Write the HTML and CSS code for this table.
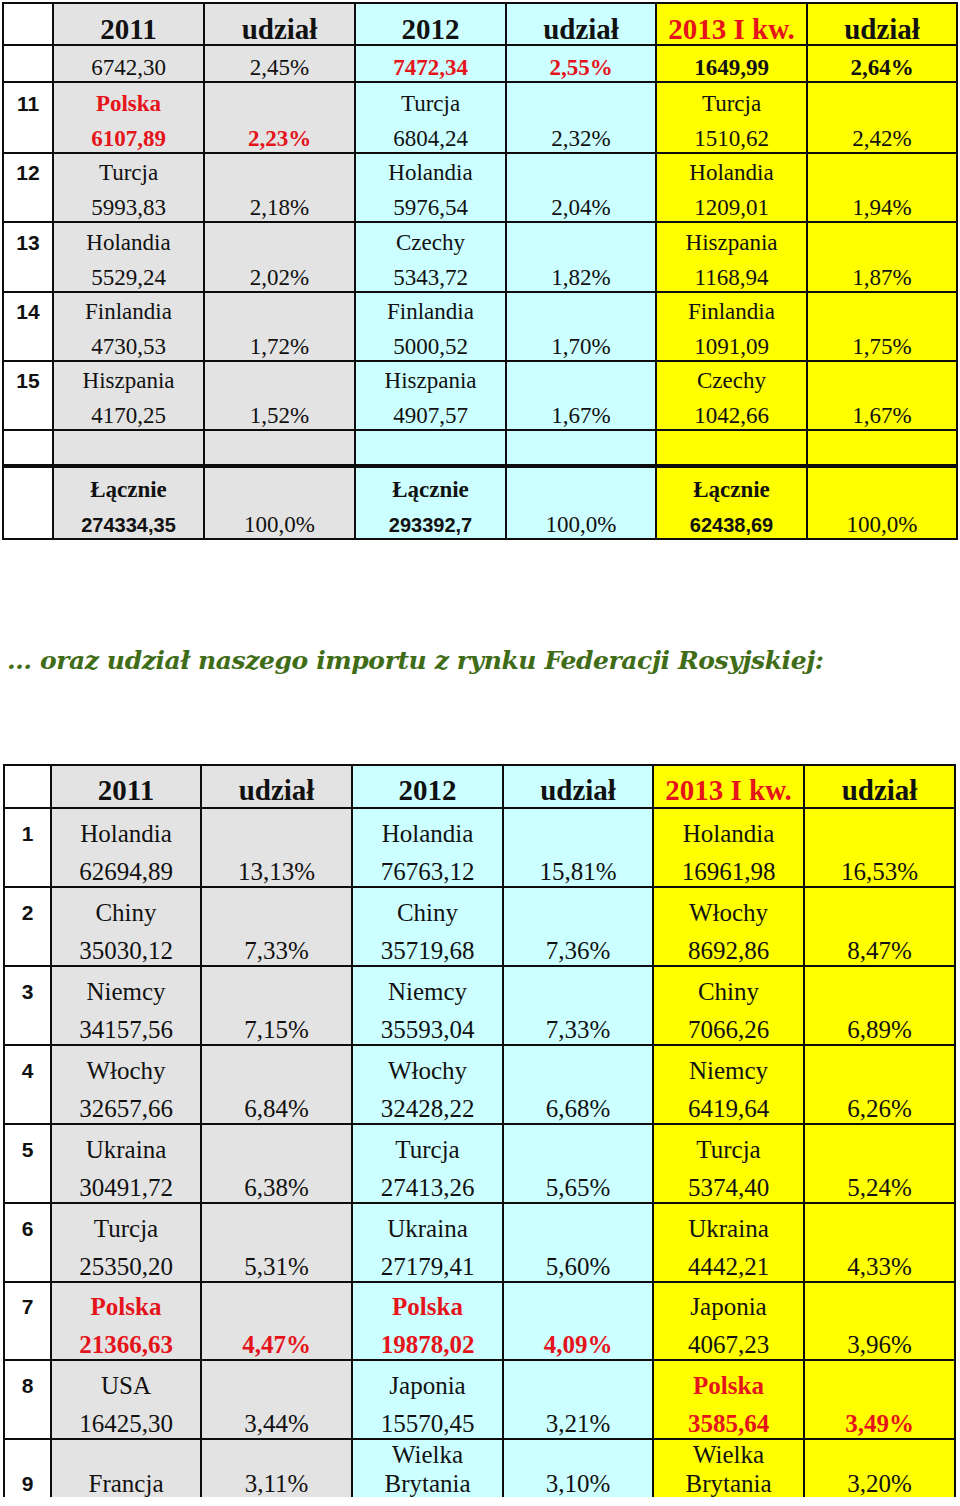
FILE: index.html
```html
<!DOCTYPE html>
<html lang="pl">
<head>
<meta charset="utf-8">
<title>Udział w imporcie</title>
<link rel="stylesheet" href="styles.css">
</head>
<body>
<div class="page">
  <div class="grid top">
    <!-- header -->
    <div class="c w"></div>
    <div class="c g hd"><div class="hl">2011</div></div>
    <div class="c g hd"><div class="hl">udział</div></div>
    <div class="c b hd"><div class="hl">2012</div></div>
    <div class="c b hd"><div class="hl">udział</div></div>
    <div class="c y hd"><div class="hl red">2013 I kw.</div></div>
    <div class="c y hd"><div class="hl">udział</div></div>
    <!-- row 10 -->
    <div class="c w"></div>
    <div class="c g"><div class="l">6742,30</div></div>
    <div class="c g"><div class="l">2,45%</div></div>
    <div class="c b"><div class="l bold red">7472,34</div></div>
    <div class="c b"><div class="l bold red">2,55%</div></div>
    <div class="c y"><div class="l bold">1649,99</div></div>
    <div class="c y"><div class="l bold">2,64%</div></div>
    <!-- 11 -->
    <div class="c w num"><div class="l">11</div><div class="l"></div></div>
    <div class="c g"><div class="l bold red">Polska</div><div class="l bold red">6107,89</div></div>
    <div class="c g"><div class="l bold red">2,23%</div></div>
    <div class="c b"><div class="l">Turcja</div><div class="l">6804,24</div></div>
    <div class="c b"><div class="l">2,32%</div></div>
    <div class="c y"><div class="l">Turcja</div><div class="l">1510,62</div></div>
    <div class="c y"><div class="l">2,42%</div></div>
    <!-- 12 -->
    <div class="c w num"><div class="l">12</div><div class="l"></div></div>
    <div class="c g"><div class="l">Turcja</div><div class="l">5993,83</div></div>
    <div class="c g"><div class="l">2,18%</div></div>
    <div class="c b"><div class="l">Holandia</div><div class="l">5976,54</div></div>
    <div class="c b"><div class="l">2,04%</div></div>
    <div class="c y"><div class="l">Holandia</div><div class="l">1209,01</div></div>
    <div class="c y"><div class="l">1,94%</div></div>
    <!-- 13 -->
    <div class="c w num"><div class="l">13</div><div class="l"></div></div>
    <div class="c g"><div class="l">Holandia</div><div class="l">5529,24</div></div>
    <div class="c g"><div class="l">2,02%</div></div>
    <div class="c b"><div class="l">Czechy</div><div class="l">5343,72</div></div>
    <div class="c b"><div class="l">1,82%</div></div>
    <div class="c y"><div class="l">Hiszpania</div><div class="l">1168,94</div></div>
    <div class="c y"><div class="l">1,87%</div></div>
    <!-- 14 -->
    <div class="c w num"><div class="l">14</div><div class="l"></div></div>
    <div class="c g"><div class="l">Finlandia</div><div class="l">4730,53</div></div>
    <div class="c g"><div class="l">1,72%</div></div>
    <div class="c b"><div class="l">Finlandia</div><div class="l">5000,52</div></div>
    <div class="c b"><div class="l">1,70%</div></div>
    <div class="c y"><div class="l">Finlandia</div><div class="l">1091,09</div></div>
    <div class="c y"><div class="l">1,75%</div></div>
    <!-- 15 -->
    <div class="c w num"><div class="l">15</div><div class="l"></div></div>
    <div class="c g"><div class="l">Hiszpania</div><div class="l">4170,25</div></div>
    <div class="c g"><div class="l">1,52%</div></div>
    <div class="c b"><div class="l">Hiszpania</div><div class="l">4907,57</div></div>
    <div class="c b"><div class="l">1,67%</div></div>
    <div class="c y"><div class="l">Czechy</div><div class="l">1042,66</div></div>
    <div class="c y"><div class="l">1,67%</div></div>
    <!-- empty -->
    <div class="c w"></div>
    <div class="c g"></div>
    <div class="c g"></div>
    <div class="c b"></div>
    <div class="c b"></div>
    <div class="c y"></div>
    <div class="c y"></div>
    <!-- total -->
    <div class="c w tot"></div>
    <div class="c g tot"><div class="l bold">Łącznie</div><div class="l sum">274334,35</div></div>
    <div class="c g tot"><div class="l">100,0%</div></div>
    <div class="c b tot"><div class="l bold">Łącznie</div><div class="l sum">293392,7</div></div>
    <div class="c b tot"><div class="l">100,0%</div></div>
    <div class="c y tot"><div class="l bold">Łącznie</div><div class="l sum">62438,69</div></div>
    <div class="c y tot"><div class="l">100,0%</div></div>
  </div>

  <h2 class="title">… oraz udział naszego importu z rynku Federacji Rosyjskiej:</h2>

  <div class="grid bottom">
    <div class="c w"></div>
    <div class="c g hd"><div class="hl">2011</div></div>
    <div class="c g hd"><div class="hl">udział</div></div>
    <div class="c b hd"><div class="hl">2012</div></div>
    <div class="c b hd"><div class="hl">udział</div></div>
    <div class="c y hd"><div class="hl red">2013 I kw.</div></div>
    <div class="c y hd"><div class="hl">udział</div></div>
    <!-- 1 -->
    <div class="c w num"><div class="l">1</div><div class="l"></div></div>
    <div class="c g"><div class="l">Holandia</div><div class="l">62694,89</div></div>
    <div class="c g"><div class="l">13,13%</div></div>
    <div class="c b"><div class="l">Holandia</div><div class="l">76763,12</div></div>
    <div class="c b"><div class="l">15,81%</div></div>
    <div class="c y"><div class="l">Holandia</div><div class="l">16961,98</div></div>
    <div class="c y"><div class="l">16,53%</div></div>
    <!-- 2 -->
    <div class="c w num"><div class="l">2</div><div class="l"></div></div>
    <div class="c g"><div class="l">Chiny</div><div class="l">35030,12</div></div>
    <div class="c g"><div class="l">7,33%</div></div>
    <div class="c b"><div class="l">Chiny</div><div class="l">35719,68</div></div>
    <div class="c b"><div class="l">7,36%</div></div>
    <div class="c y"><div class="l">Włochy</div><div class="l">8692,86</div></div>
    <div class="c y"><div class="l">8,47%</div></div>
    <!-- 3 -->
    <div class="c w num"><div class="l">3</div><div class="l"></div></div>
    <div class="c g"><div class="l">Niemcy</div><div class="l">34157,56</div></div>
    <div class="c g"><div class="l">7,15%</div></div>
    <div class="c b"><div class="l">Niemcy</div><div class="l">35593,04</div></div>
    <div class="c b"><div class="l">7,33%</div></div>
    <div class="c y"><div class="l">Chiny</div><div class="l">7066,26</div></div>
    <div class="c y"><div class="l">6,89%</div></div>
    <!-- 4 -->
    <div class="c w num"><div class="l">4</div><div class="l"></div></div>
    <div class="c g"><div class="l">Włochy</div><div class="l">32657,66</div></div>
    <div class="c g"><div class="l">6,84%</div></div>
    <div class="c b"><div class="l">Włochy</div><div class="l">32428,22</div></div>
    <div class="c b"><div class="l">6,68%</div></div>
    <div class="c y"><div class="l">Niemcy</div><div class="l">6419,64</div></div>
    <div class="c y"><div class="l">6,26%</div></div>
    <!-- 5 -->
    <div class="c w num"><div class="l">5</div><div class="l"></div></div>
    <div class="c g"><div class="l">Ukraina</div><div class="l">30491,72</div></div>
    <div class="c g"><div class="l">6,38%</div></div>
    <div class="c b"><div class="l">Turcja</div><div class="l">27413,26</div></div>
    <div class="c b"><div class="l">5,65%</div></div>
    <div class="c y"><div class="l">Turcja</div><div class="l">5374,40</div></div>
    <div class="c y"><div class="l">5,24%</div></div>
    <!-- 6 -->
    <div class="c w num"><div class="l">6</div><div class="l"></div></div>
    <div class="c g"><div class="l">Turcja</div><div class="l">25350,20</div></div>
    <div class="c g"><div class="l">5,31%</div></div>
    <div class="c b"><div class="l">Ukraina</div><div class="l">27179,41</div></div>
    <div class="c b"><div class="l">5,60%</div></div>
    <div class="c y"><div class="l">Ukraina</div><div class="l">4442,21</div></div>
    <div class="c y"><div class="l">4,33%</div></div>
    <!-- 7 -->
    <div class="c w num"><div class="l">7</div><div class="l"></div></div>
    <div class="c g"><div class="l bold red">Polska</div><div class="l bold red">21366,63</div></div>
    <div class="c g"><div class="l bold red">4,47%</div></div>
    <div class="c b"><div class="l bold red">Polska</div><div class="l bold red">19878,02</div></div>
    <div class="c b"><div class="l bold red">4,09%</div></div>
    <div class="c y"><div class="l">Japonia</div><div class="l">4067,23</div></div>
    <div class="c y"><div class="l">3,96%</div></div>
    <!-- 8 -->
    <div class="c w num"><div class="l">8</div><div class="l"></div></div>
    <div class="c g"><div class="l">USA</div><div class="l">16425,30</div></div>
    <div class="c g"><div class="l">3,44%</div></div>
    <div class="c b"><div class="l">Japonia</div><div class="l">15570,45</div></div>
    <div class="c b"><div class="l">3,21%</div></div>
    <div class="c y"><div class="l bold red">Polska</div><div class="l bold red">3585,64</div></div>
    <div class="c y"><div class="l bold red">3,49%</div></div>
    <!-- 9 -->
    <div class="c w num last"><div class="l"></div><div class="l">9</div></div>
    <div class="c g last"><div class="l"></div><div class="l">Francja</div></div>
    <div class="c g last"><div class="l"></div><div class="l">3,11%</div></div>
    <div class="c b last"><div class="wrap">Wielka Brytania</div></div>
    <div class="c b last"><div class="l"></div><div class="l">3,10%</div></div>
    <div class="c y last"><div class="wrap">Wielka Brytania</div></div>
    <div class="c y last"><div class="l"></div><div class="l">3,20%</div></div>
  </div>
</div>
</body>
</html>
```

FILE: styles.css
```css
html, body {
  margin: 0;
  padding: 0;
  background: #ffffff;
}

.page {
  height: 1497px;
  overflow: hidden;
  font-family: "Liberation Serif", "Times New Roman", serif;
  color: #111111;
}

.grid {
  display: grid;
  background: #0d0d0d;
  gap: 2px;
  padding: 2px;
}

.top {
  margin: 2px 0 0 2px;
  width: max-content;
  grid-template-columns: 48px 149px 149px 149px 148px 149px 148px;
  grid-template-rows: 40px 35px 69px 67px 68px 67px 67px 33px 72px;
  font-size: 23px;
}

.bottom {
  margin: 0 0 0 3px;
  width: max-content;
  grid-template-columns: 45px 148px 149px 149px 148px 149px 149px;
  grid-template-rows: 41px 77px 77px 77px 77px 77px 77px 76px 77px 120px;
  font-size: 25px;
}

.c {
  display: flex;
  flex-direction: column;
  justify-content: flex-end;
  align-items: stretch;
  text-align: center;
  box-sizing: border-box;
  min-width: 0;
}

.top .c { gap: 9px; }
.bottom .c { gap: 11.5px; padding-bottom: 1px; }

.w { background: #ffffff; }
.g { background: #e3e3e3; }
.b { background: #ccffff; }
.y { background: #ffff00; }

.l {
  white-space: nowrap;
}
.top .l { height: 26px; line-height: 26px; }
.bottom .l { height: 27px; line-height: 27px; }

.hd .hl {
  font-size: 29px;
  line-height: 29px;
  font-weight: bold;
}
.bottom .hd { padding-bottom: 2px; }

.num {
  font-family: "Liberation Sans", Arial, sans-serif;
  font-weight: bold;
  font-size: 21px;
}

.bold { font-weight: bold; }
.red { color: #e5141b; }

.tot { border-top: 2px solid #0d0d0d; }

.sum {
  font-family: "Liberation Sans", Arial, sans-serif;
  font-weight: bold;
  font-size: 20px;
}

.bottom .last {
  justify-content: flex-start;
  gap: 0;
  padding-bottom: 0;
}
.bottom .last .l,
.bottom .last .wrap {
  height: auto;
  line-height: 29px;
  min-height: 29px;
}

.title {
  margin: 101px 0 83px 7px;
  height: 40px;
  line-height: 40px;
  font-family: "DejaVu Serif", "Liberation Serif", serif;
  font-style: italic;
  font-weight: bold;
  font-size: 25px;
  letter-spacing: -0.4px;
  color: #3f6c16;
  white-space: nowrap;
}
```
